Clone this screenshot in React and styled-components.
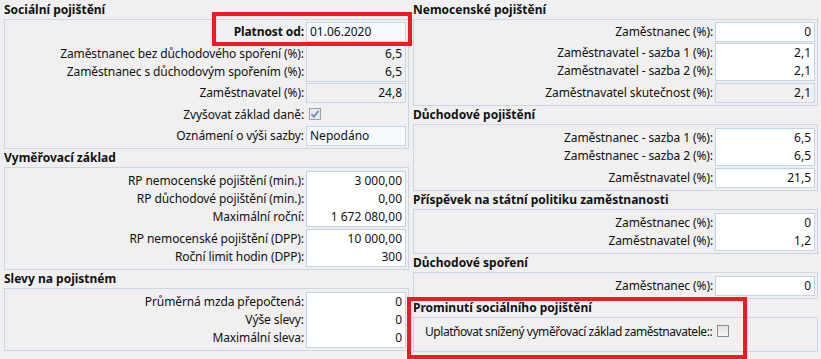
import React from 'react'
import styled, { createGlobalStyle } from 'styled-components'

const GlobalStyle = createGlobalStyle`
    html, body {
        margin: 0;
        padding: 0;
        background: #f0f0f0;
    }
    body {
        font-family: "Noto Sans", "Open Sans", sans-serif;
        font-size: 12px;
        color: #111;
    }
`

const Page = styled.div`
    position: relative;
    width: 821px;
    height: 359px;
    overflow: hidden;
    display: grid;
    grid-template-columns: 405px 405px;
    column-gap: 4px;
    align-items: start;
    padding: 1px 3px 0 4px;
    box-sizing: border-box;
`

const Column = styled.div`
    display: flex;
    flex-direction: column;
`

const SectionTitle = styled.div`
    height: 18px;
    line-height: 18px;
    font-weight: bold;
    white-space: nowrap;
`

const Box = styled.div`
    border: 1px solid #c9d6e3;
    padding: ${p => p.$pad || '2px 2px 2px 2px'};
    display: flex;
    flex-direction: column;
    gap: 2px;
`

const Line = styled.div`
    display: flex;
    align-items: flex-start;
    margin-top: ${p => p.$tight ? '-1px' : '0'};
`

const Labels = styled.div`
    flex: 1;
    display: flex;
    flex-direction: column;
    align-items: flex-end;
    padding: 1px 2px 0 0;
`

const Label = styled.div`
    height: 18px;
    line-height: 18px;
    white-space: nowrap;
    letter-spacing: -0.1px;
    font-weight: ${p => p.$bold ? 'bold' : 'normal'};
`

const ValueBox = styled.div`
    width: 100px;
    box-sizing: border-box;
    border: 1px solid ${p => p.$kind === 'white' ? '#c3d3e6' : '#c9d6e3'};
    background: ${p => p.$kind === 'white' ? '#ffffff' : p.$kind === 'light' ? '#f6f9fd' : '#f0f0f0'};
    display: flex;
    flex-direction: column;
`

const Value = styled.div`
    height: 18px;
    line-height: 18px;
    padding: 0 3px;
    text-align: ${p => p.$left ? 'left' : 'right'};
    white-space: nowrap;
`

const CheckCell = styled.div`
    width: 100px;
    height: 18px;
    display: flex;
    align-items: center;
    padding-left: 3px;
    box-sizing: border-box;
`

const Check = styled.span`
    width: 12px;
    height: 12px;
    flex: none;
    box-sizing: border-box;
    border: 1px solid ${p => p.$on ? '#9aa4b0' : '#8c8c8c'};
    background: ${p => p.$on ? '#e3e8ee' : 'linear-gradient(#e2e2e2, #f5f5f5)'};
    display: inline-flex;
    align-items: center;
    justify-content: center;
`

const FreeRow = styled.div`
    display: flex;
    align-items: center;
    height: 18px;
    padding-left: 9px;
    gap: 5px;
    white-space: nowrap;
    letter-spacing: -0.45px;
`

const Mark = styled.div`
    position: absolute;
    left: ${p => p.$x}px;
    top: ${p => p.$y}px;
    width: ${p => p.$w}px;
    height: ${p => p.$h}px;
    border: 4px solid #ed1c24;
    box-sizing: border-box;
    pointer-events: none;
`

const Tick = () => (
    <svg width="10" height="10" viewBox="0 0 10 10">
        <path d="M1.5 5.2 L4 7.8 L8.6 1.8" fill="none" stroke="#6f86ad" strokeWidth="1.6" />
    </svg>
)

const Field = ({ labels, values, kind, left, bold, tight }) => (
    <Line $tight={tight}>
        <Labels>
            {labels.map((l, i) => <Label key={i} $bold={bold}>{l}</Label>)}
        </Labels>
        <ValueBox $kind={kind}>
            {values.map((v, i) => <Value key={i} $left={left}>{v}</Value>)}
        </ValueBox>
    </Line>
)

const CheckField = ({ label, on }) => (
    <Line>
        <Labels>
            <Label>{label}</Label>
        </Labels>
        <CheckCell>
            <Check $on={on}>{on && <Tick />}</Check>
        </CheckCell>
    </Line>
)

const App = () => {
    return (
        <>
            <GlobalStyle />
            <Page>
                <Column>
                    <SectionTitle>Sociální pojištění</SectionTitle>
                    <Box>
                        <Field labels={['Platnost od:']} values={['01.06.2020']} kind="light" left bold />
                        <Field
                            labels={['Zaměstnanec bez důchodového spoření (%):', 'Zaměstnanec s důchodovým spořením (%):']}
                            values={['6,5', '6,5']}
                        />
                        <Field labels={['Zaměstnavatel (%):']} values={['24,8']} tight />
                        <CheckField label="Zvyšovat základ daně:" on />
                        <Field labels={['Oznámení o výši sazby:']} values={['Nepodáno']} kind="light" left />
                    </Box>

                    <SectionTitle>Vyměřovací základ</SectionTitle>
                    <Box $pad="3px 2px 2px 2px">
                        <Field
                            labels={['RP nemocenské pojištění (min.):', 'RP důchodové pojištění (min.):', 'Maximální roční:']}
                            values={['3 000,00', '0,00', '1 672 080,00']}
                            kind="white"
                        />
                        <Field
                            labels={['RP nemocenské pojištění (DPP):', 'Roční limit hodin (DPP):']}
                            values={['10 000,00', '300']}
                            kind="white"
                        />
                    </Box>

                    <SectionTitle>Slevy na pojistném</SectionTitle>
                    <Box $pad="3px 2px 2px 2px">
                        <Field
                            labels={['Průměrná mzda přepočtená:', 'Výše slevy:', 'Maximální sleva:']}
                            values={['0', '0', '0']}
                            kind="white"
                        />
                    </Box>
                </Column>

                <Column>
                    <SectionTitle>Nemocenské pojištění</SectionTitle>
                    <Box>
                        <Field labels={['Zaměstnanec (%):']} values={['0']} kind="white" />
                        <Field
                            labels={['Zaměstnavatel - sazba 1 (%):', 'Zaměstnavatel - sazba 2 (%):']}
                            values={['2,1', '2,1']}
                            kind="white"
                            tight
                        />
                        <Field labels={['Zaměstnavatel skutečnost (%):']} values={['2,1']} />
                    </Box>

                    <SectionTitle>Důchodové pojištění</SectionTitle>
                    <Box $pad="3px 2px 2px 2px">
                        <Field
                            labels={['Zaměstnanec - sazba 1 (%):', 'Zaměstnanec - sazba 2 (%):']}
                            values={['6,5', '6,5']}
                            kind="white"
                        />
                        <Field labels={['Zaměstnavatel (%):']} values={['21,5']} kind="white" />
                    </Box>

                    <SectionTitle>Příspěvek na státní politiku zaměstnanosti</SectionTitle>
                    <Box $pad="3px 2px 2px 2px">
                        <Field
                            labels={['Zaměstnanec (%):', 'Zaměstnavatel (%):']}
                            values={['0', '1,2']}
                            kind="white"
                        />
                    </Box>

                    <SectionTitle>Důchodové spoření</SectionTitle>
                    <Box $pad="3px 2px 2px 2px">
                        <Field labels={['Zaměstnanec (%):']} values={['0']} kind="white" />
                    </Box>

                    <SectionTitle>Prominutí sociálního pojištění</SectionTitle>
                    <Box $pad="4px 2px 11px 2px">
                        <FreeRow>
                            Uplatňovat snížený vyměřovací základ zaměstnavatele::
                            <Check />
                        </FreeRow>
                    </Box>
                </Column>

                <Mark $x={212} $y={12} $w={200} $h={34} />
                <Mark $x={407} $y={297} $w={340} $h={62} />
            </Page>
        </>
    )
}

export default App
